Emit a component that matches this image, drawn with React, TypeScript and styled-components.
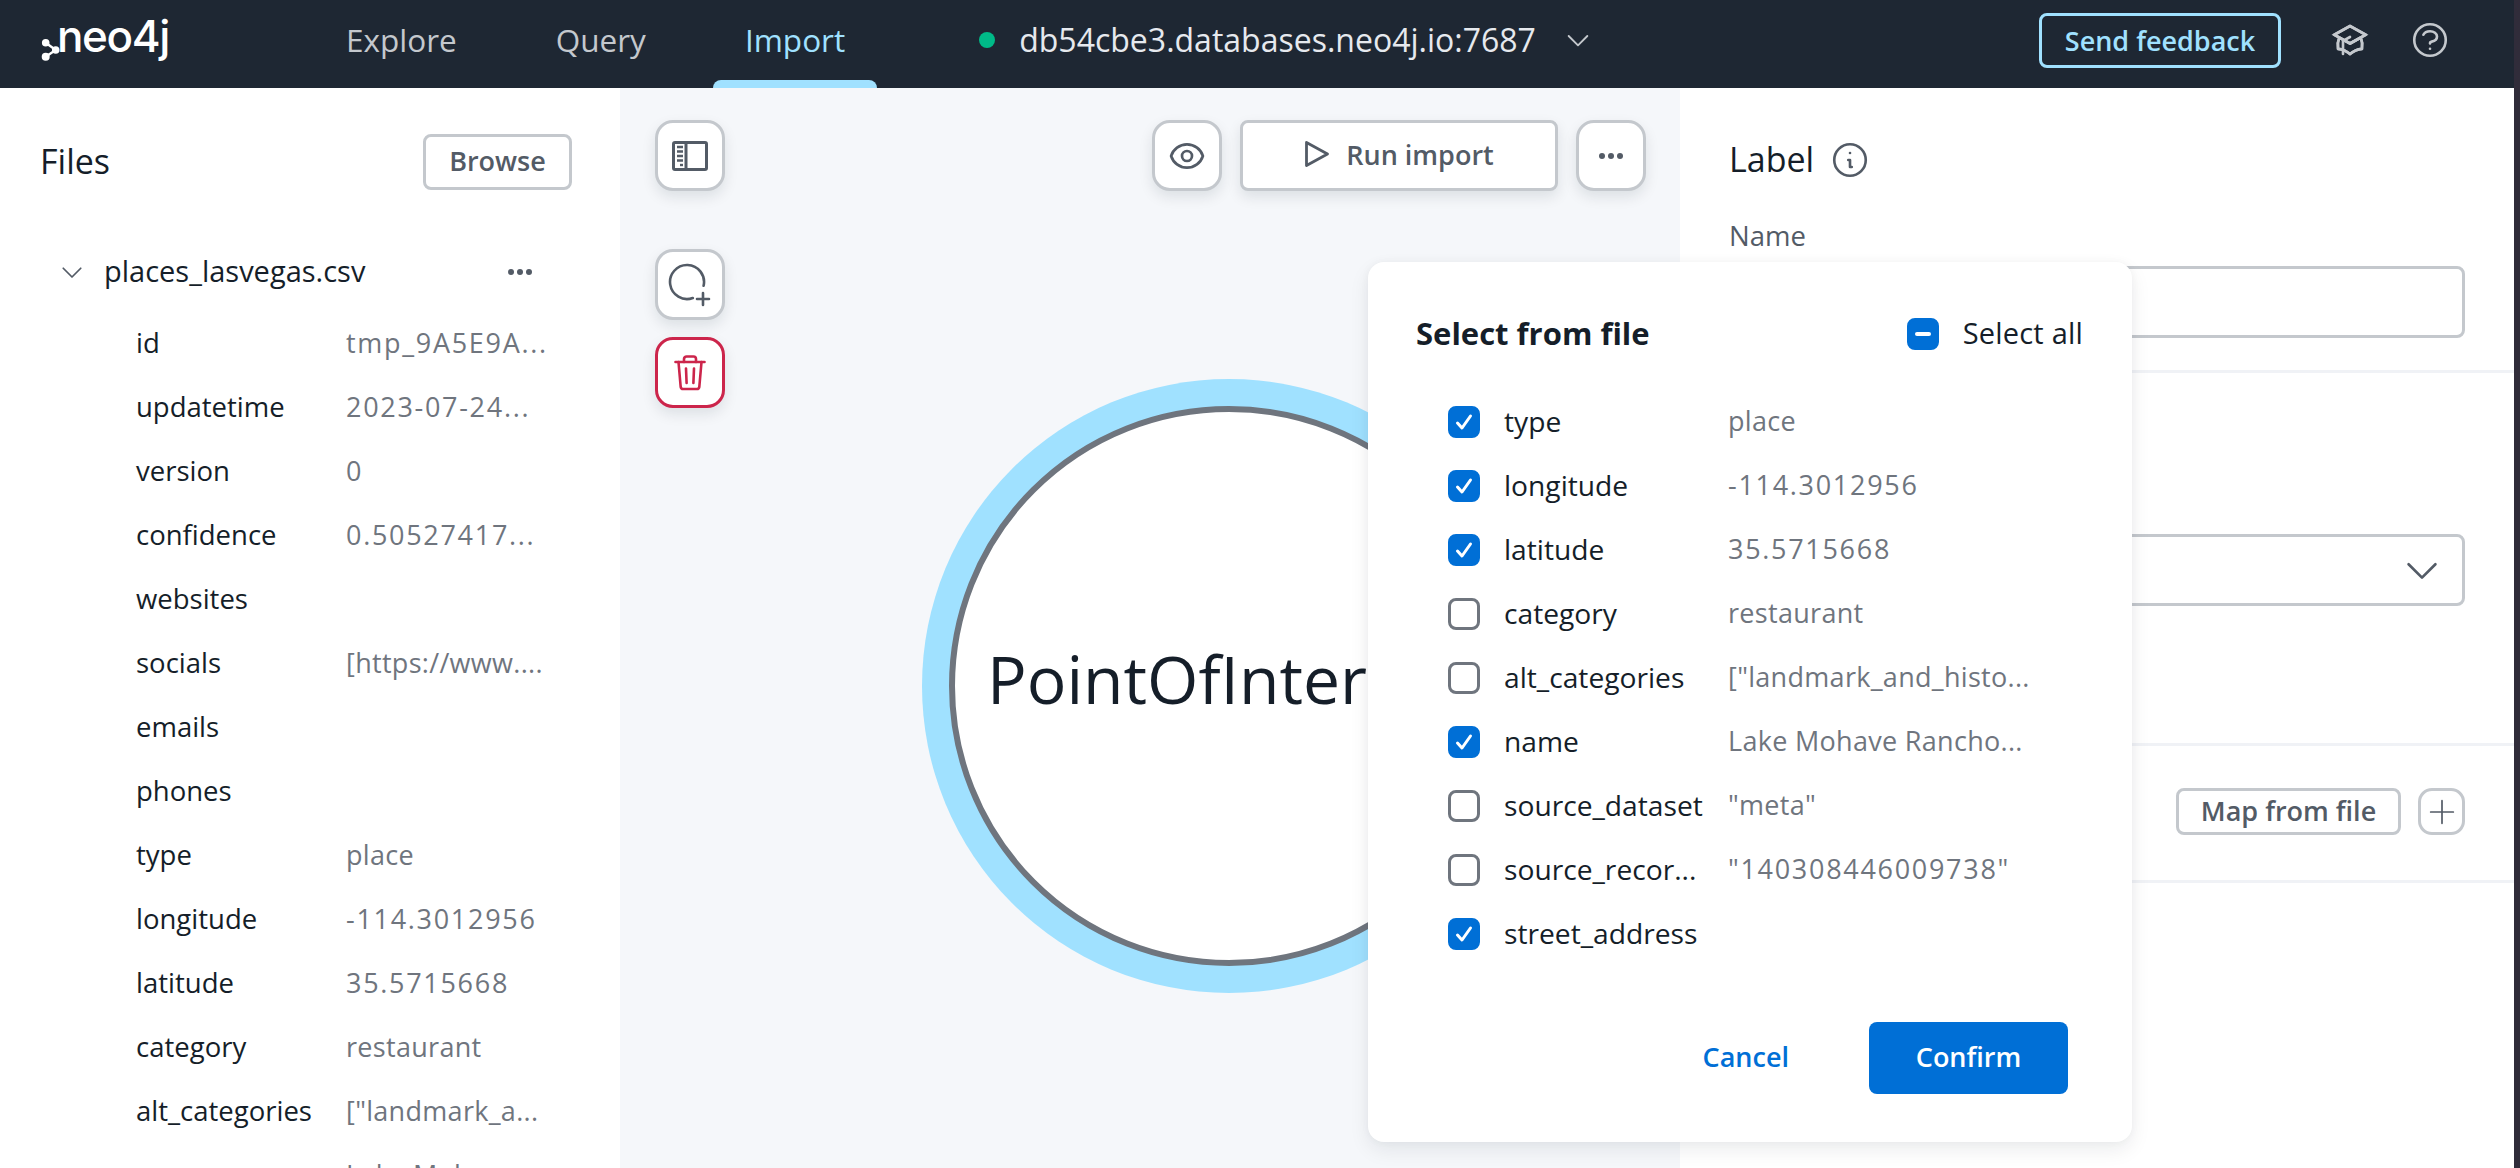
import React from 'react';
import styled, {createGlobalStyle} from 'styled-components';
import {
  HiOutlineAcademicCap,
  HiOutlineChevronDown,
  HiOutlineEye,
  HiOutlineInformationCircle,
  HiOutlinePlus,
  HiOutlineQuestionMarkCircle,
} from 'react-icons/hi';

const fileRows = [
  ['id', 'tmp_9A5E9A...'],
  ['updatetime', '2023-07-24...'],
  ['version', '0'],
  ['confidence', '0.50527417...'],
  ['websites', ''],
  ['socials', '[https://www....'],
  ['emails', ''],
  ['phones', ''],
  ['type', 'place'],
  ['longitude', '-114.3012956'],
  ['latitude', '35.5715668'],
  ['category', 'restaurant'],
  ['alt_categories', '["landmark_a...'],
  ['name', 'Lake Mohav...'],
];

const pickRows: [string, string, boolean][] = [
  ['type', 'place', true],
  ['longitude', '-114.3012956', true],
  ['latitude', '35.5715668', true],
  ['category', 'restaurant', false],
  ['alt_categories', '["landmark_and_histo...', false],
  ['name', 'Lake Mohave Rancho...', true],
  ['source_dataset', '"meta"', false],
  ['source_recor...', '"140308446009738"', false],
  ['street_address', '', true],
];

// digits run narrower in the fallback font than in the original
const hasDigits = (value: string) => /\d/.test(value);

const Dots: React.FC = () => (
  <svg width="26" height="8" viewBox="0 0 26 8" fill="currentColor">
    <circle cx="4" cy="4" r="3" />
    <circle cx="13" cy="4" r="3" />
    <circle cx="22" cy="4" r="3" />
  </svg>
);

const Check: React.FC = () => (
  <svg width="20" height="20" viewBox="0 0 20 20" fill="none" stroke="#fff" strokeWidth="3" strokeLinecap="round" strokeLinejoin="round">
    <path d="M3.5 11l4.5 5L16.5 4" />
  </svg>
);

const SidebarIcon: React.FC = () => (
  <svg width="36" height="30" viewBox="0 0 36 30" fill="none" stroke="#535b66">
    <rect x="1.5" y="1.5" width="33" height="27" rx="1.5" strokeWidth="3" />
    <path d="M14 1.5v27" strokeWidth="3" />
    <path d="M5 6h6M5 10.5h6M5 15h6M5 19.5h6" strokeWidth="2.4" />
    <path d="M8 24h3" strokeWidth="2.4" />
  </svg>
);

const AddNodeIcon: React.FC = () => (
  <svg width="44" height="44" viewBox="0 0 44 44" fill="none" stroke="#535b66" strokeWidth="2.6" strokeLinecap="round">
    <path d="M35.6 22.8A17 17 0 1 0 24.8 35" />
    <path d="M29 36h12M35 30v12" />
  </svg>
);

const TrashIcon: React.FC = () => (
  <svg width="32" height="36" viewBox="0 0 32 36" fill="none" stroke="#cc254b" strokeWidth="2.6" strokeLinecap="round" strokeLinejoin="round">
    <path d="M1.5 7h29" />
    <path d="M10 7V4a2.5 2.5 0 0 1 2.5-2.5h7A2.5 2.5 0 0 1 22 4v3" />
    <path d="M4.5 7l2.2 25a2.4 2.4 0 0 0 2.4 2h13.8a2.4 2.4 0 0 0 2.4-2L27.5 7" />
    <path d="M12 13.5l.6 14.5M20 13.5l-.6 14.5" />
  </svg>
);

const PlayIcon: React.FC = () => (
  <svg width="26" height="28" viewBox="0 0 26 28" fill="none" stroke="#535b66" strokeWidth="2.8" strokeLinejoin="round">
    <path d="M2.5 2.5L23.5 14 2.5 25.5z" />
  </svg>
);

const LogoMark: React.FC = () => (
  <svg width="20" height="24" viewBox="0 0 20 24" fill="#fff" stroke="#fff" strokeWidth="1.6">
    <circle cx="5.7" cy="4.7" r="3" />
    <circle cx="15.7" cy="12" r="3" />
    <circle cx="5.7" cy="18.7" r="3.2" />
    <path d="M5.7 4.7L15.7 12 5.7 18.7" fill="none" strokeWidth="2.4" />
  </svg>
);

const App: React.FC = () => {
  return (
    <Root>
      <GlobalStyle />
      <Main>
        <Header>
          <Logo>
            <MarkWrap>
              <LogoMark />
            </MarkWrap>
            <LogoText>neo4j</LogoText>
          </Logo>
          <Nav>
            <NavItem>Explore</NavItem>
            <NavItem>Query</NavItem>
            <NavItem $active>Import</NavItem>
          </Nav>
          <DbStatus>
            <StatusDot />
            <DbName>db54cbe3.databases.neo4j.io:7687</DbName>
            <HiOutlineChevronDown size={32} strokeWidth={1.4} color="#c4c8cd" />
          </DbStatus>
          <HeaderRight>
            <FeedbackButton>Send feedback</FeedbackButton>
            <HeaderIcons>
              <HiOutlineAcademicCap size={42} strokeWidth={1.5} color="#c4c8cd" />
              <HiOutlineQuestionMarkCircle size={42} strokeWidth={1.5} color="#c4c8cd" />
            </HeaderIcons>
          </HeaderRight>
        </Header>

        <Body>
          <FilesPanel>
            <FilesHeader>
              <PanelTitle>Files</PanelTitle>
              <OutlineButton>Browse</OutlineButton>
            </FilesHeader>
            <FileName>
              <HiOutlineChevronDown size={30} strokeWidth={1.4} color="#535b66" />
              <FileTitle>places_lasvegas.csv</FileTitle>
              <FileDots>
                <Dots />
              </FileDots>
            </FileName>
            {fileRows.map(([key, value]) => (
              <FileRow key={key}>
                <FileKey>{key}</FileKey>
                <Value $digits={hasDigits(value)}>{value}</Value>
              </FileRow>
            ))}
          </FilesPanel>

          <Canvas>
            <Node>
              <NodeInner>
                <NodeLabel>PointOfInterest</NodeLabel>
              </NodeInner>
            </Node>
            <LeftTools>
              <IconButton>
                <SidebarIcon />
              </IconButton>
              <NodeTools>
                <IconButton>
                  <AddNodeIcon />
                </IconButton>
                <IconButton $danger>
                  <TrashIcon />
                </IconButton>
              </NodeTools>
            </LeftTools>
            <RightTools>
              <IconButton>
                <HiOutlineEye size={40} strokeWidth={1.6} color="#535b66" />
              </IconButton>
              <RunButton>
                <PlayIcon />
                Run import
              </RunButton>
              <IconButton>
                <Dots />
              </IconButton>
            </RightTools>
          </Canvas>

          <SidePanel>
            <LabelSection>
              <LabelTitle>
                <PanelTitle>Label</PanelTitle>
                <HiOutlineInformationCircle size={42} strokeWidth={1.5} color="#535b66" />
              </LabelTitle>
              <FieldLabel>Name</FieldLabel>
              <Field />
            </LabelSection>
            <KeySection>
              <Field>
                <HiOutlineChevronDown size={46} strokeWidth={1.4} color="#535b66" />
              </Field>
            </KeySection>
            <MapSection>
              <MapButton>Map from file</MapButton>
              <PlusButton>
                <HiOutlinePlus size={34} strokeWidth={1.2} color="#535b66" />
              </PlusButton>
            </MapSection>
          </SidePanel>
        </Body>
      </Main>
      <WindowEdge />

      <Modal>
        <ModalHeader>
          <ModalTitle>Select from file</ModalTitle>
          <SelectAll>
            <Box $checked>
              <MinusBar />
            </Box>
            <SelectAllText>Select all</SelectAllText>
          </SelectAll>
        </ModalHeader>
        <PickList>
          {pickRows.map(([key, value, checked]) => (
            <PickRow key={key}>
              <Box $checked={checked}>{checked && <Check />}</Box>
              <PickKey>{key}</PickKey>
              <Value $digits={hasDigits(value)}>{value}</Value>
            </PickRow>
          ))}
        </PickList>
        <ModalFooter>
          <CancelButton>Cancel</CancelButton>
          <ConfirmButton>Confirm</ConfirmButton>
        </ModalFooter>
      </Modal>
    </Root>
  );
};

const GlobalStyle = createGlobalStyle`
  html, body {
    margin: 0;
    padding: 0;
    width: 2520px;
    height: 1168px;
    overflow: hidden;
    background: #fff;
  }
  * {
    box-sizing: border-box;
  }
  body, button {
    font-family: "Open Sans", "Noto Sans", sans-serif;
  }
`;

const Root = styled.div`
  position: relative;
  display: flex;
  width: 2520px;
  height: 1168px;
  overflow: hidden;
  color: #151e29;
  font-size: 27.5px;
`;

const Main = styled.div`
  display: flex;
  flex-direction: column;
  width: 2514px;
`;

const WindowEdge = styled.div`
  flex: 1;
  background: #302c3a;
`;

const Header = styled.header`
  display: flex;
  align-items: center;
  flex: 0 0 88px;
  height: 88px;
  padding-left: 40px;
  background: #1e2733;
`;

const Logo = styled.div`
  display: flex;
  align-items: flex-start;
  align-self: flex-start;
  width: 274px;
  padding-top: 14px;
  color: #fff;
`;

const MarkWrap = styled.div`
  display: flex;
  margin-top: 24px;
`;

const LogoText = styled.span`
  margin-left: -3px;
  font-family: "Inter", sans-serif;
  font-size: 44px;
  font-weight: 500;
  line-height: 44px;
  letter-spacing: -1.4px;
`;

const Nav = styled.nav`
  display: flex;
  gap: 35px;
  height: 100%;
`;

const NavItem = styled.div<{$active?: boolean}>`
  position: relative;
  display: flex;
  align-items: center;
  padding: 0 32px 10px;
  font-size: 31.5px;
  color: ${(p) => (p.$active ? '#a0e1ff' : '#c4c8cd')};

  ${(p) =>
    p.$active &&
    `&::after {
      content: '';
      position: absolute;
      left: 0;
      right: 0;
      bottom: 0;
      height: 8px;
      border-radius: 8px 8px 0 0;
      background: #a0e1ff;
    }`}
`;

const DbStatus = styled.div`
  display: flex;
  align-items: center;
  margin-left: 102px;
  padding-bottom: 8px;
`;

const StatusDot = styled.span`
  width: 16px;
  height: 16px;
  border-radius: 50%;
  background: #00ba88;
  margin-right: 24px;
`;

const DbName = styled.span`
  padding-bottom: 2px;
  font-size: 32px;
  color: #e6e9ee;
  margin-right: 26px;
`;

const HeaderRight = styled.div`
  display: flex;
  align-items: center;
  margin-left: auto;
  padding: 0 63px 8px 0;
`;

const FeedbackButton = styled.button`
  width: 242px;
  height: 55px;
  padding: 0;
  border: 3px solid #a0e1ff;
  border-radius: 8px;
  background: transparent;
  color: #a0e1ff;
  font-size: 27px;
  font-weight: 600;
`;

const HeaderIcons = styled.div`
  display: flex;
  align-items: center;
  gap: 38px;
  margin-left: 48px;
`;

const Body = styled.div`
  display: flex;
  flex: 1;
  min-height: 0;
`;

const FilesPanel = styled.aside`
  flex: 0 0 620px;
  padding: 46px 48px 0 40px;
  overflow: hidden;
  background: #fff;
`;

const FilesHeader = styled.div`
  display: flex;
  align-items: center;
  justify-content: space-between;
  margin-bottom: 50px;
`;

const PanelTitle = styled.h2`
  margin: 0;
  padding-bottom: 3px;
  font-size: 34px;
  font-weight: 500;
  line-height: 40px;
`;

const OutlineButton = styled.button`
  width: 149px;
  height: 56px;
  padding: 0 0 3px;
  border: 3px solid #c4c8cd;
  border-radius: 8px;
  background: #fff;
  color: #535b66;
  font-size: 27px;
  font-weight: 600;
`;

const FileName = styled.div`
  display: flex;
  align-items: center;
  height: 64px;
  margin-left: 17px;
  margin-bottom: 8px;
`;

const FileTitle = styled.span`
  margin-left: 17px;
  padding-bottom: 3px;
  font-size: 29px;
  font-weight: 500;
`;

const FileDots = styled.div`
  display: flex;
  margin-left: auto;
  margin-right: 39px;
  color: #535b66;
`;

const FileRow = styled.div`
  display: grid;
  grid-template-columns: 210px 1fr;
  align-items: center;
  height: 64px;
  padding-left: 96px;
`;

const FileKey = styled.span`
  padding-bottom: 3px;
  white-space: nowrap;
`;

const Value = styled.span<{$digits?: boolean}>`
  padding-bottom: 3px;
  color: #6f757e;
  font-size: 27px;
  letter-spacing: ${(p) => (p.$digits ? '1.7px' : '0.3px')};
  white-space: nowrap;
`;

const Canvas = styled.main`
  position: relative;
  display: flex;
  justify-content: space-between;
  flex: 1;
  min-width: 0;
  padding: 32px 34px 0 35px;
  overflow: hidden;
  background: #f5f7fa;
`;

const Node = styled.div`
  position: absolute;
  left: 302px;
  top: 291px;
  width: 614px;
  height: 614px;
  padding: 27px;
  border-radius: 50%;
  background: #a0e1ff;
`;

const NodeInner = styled.div`
  display: flex;
  align-items: center;
  width: 100%;
  height: 100%;
  padding: 0 0 16px 32px;
  border: 6px solid #6f757e;
  border-radius: 50%;
  background: #fff;
`;

const NodeLabel = styled.span`
  font-size: 66px;
  white-space: nowrap;
`;

const LeftTools = styled.div`
  position: relative;
  display: flex;
  flex-direction: column;
  gap: 58px;
`;

const NodeTools = styled.div`
  display: flex;
  flex-direction: column;
  gap: 17px;
`;

const RightTools = styled.div`
  position: relative;
  display: flex;
  gap: 18px;
  align-self: flex-start;
`;

const IconButton = styled.button<{$danger?: boolean}>`
  display: flex;
  align-items: center;
  justify-content: center;
  width: 70px;
  height: 71px;
  padding: 0;
  border: 3px solid ${(p) => (p.$danger ? '#cc254b' : '#c4c8cd')};
  border-radius: 18px;
  background: #fff;
  color: #535b66;
  box-shadow: 0 6px 14px rgba(12, 26, 37, 0.1);
`;

const RunButton = styled.button`
  display: flex;
  align-items: center;
  justify-content: center;
  gap: 16px;
  width: 318px;
  height: 71px;
  padding: 0 0 3px;
  border: 3px solid #c4c8cd;
  border-radius: 8px;
  background: #fff;
  color: #535b66;
  font-size: 27px;
  font-weight: 600;
  box-shadow: 0 6px 14px rgba(12, 26, 37, 0.1);
`;

const SidePanel = styled.aside`
  flex: 0 0 834px;
  background: #fff;
`;

const LabelSection = styled.section`
  padding: 52px 49px 32px 49px;
  border-bottom: 3px solid #f0f2f6;
`;

const LabelTitle = styled.div`
  display: flex;
  align-items: center;
  gap: 15px;
  height: 40px;
  margin-bottom: 40px;
`;

const FieldLabel = styled.div`
  line-height: 32px;
  margin-bottom: 14px;
  padding-bottom: 3px;
  height: 32px;
  color: #535b66;
`;

const Field = styled.div`
  display: flex;
  align-items: center;
  justify-content: flex-end;
  height: 72px;
  padding-right: 17px;
  border: 3px solid #c4c8cd;
  border-radius: 8px;
`;

const KeySection = styled.section`
  height: 373px;
  padding: 161px 49px 0 49px;
  border-bottom: 3px solid #f0f2f6;
`;

const MapSection = styled.section`
  display: flex;
  justify-content: flex-end;
  align-items: flex-start;
  gap: 17px;
  height: 137px;
  padding: 42px 49px 0 0;
  border-bottom: 3px solid #f0f2f6;
`;

const MapButton = styled.button`
  width: 225px;
  height: 47px;
  padding: 0 0 3px;
  border: 3px solid #c4c8cd;
  border-radius: 8px;
  background: #fff;
  color: #535b66;
  font-size: 27px;
  font-weight: 600;
`;

const PlusButton = styled.button`
  display: flex;
  align-items: center;
  justify-content: center;
  width: 47px;
  height: 47px;
  padding: 0;
  border: 3px solid #c4c8cd;
  border-radius: 14px;
  background: #fff;
`;

const Modal = styled.div`
  position: absolute;
  left: 1368px;
  top: 262px;
  display: flex;
  flex-direction: column;
  width: 764px;
  height: 880px;
  padding: 56px 49px 48px 48px;
  border-radius: 16px;
  background: #fff;
  box-shadow: 0 8px 20px rgba(12, 26, 37, 0.08), 0 0 8px rgba(12, 26, 37, 0.04);
`;

const ModalHeader = styled.div`
  display: flex;
  align-items: center;
  justify-content: space-between;
  height: 32px;
  margin-bottom: 40px;
`;

const ModalTitle = styled.h3`
  margin: 0;
  padding-bottom: 3px;
  font-size: 31px;
  font-weight: 700;
`;

const SelectAll = styled.div`
  display: flex;
  align-items: center;
  gap: 24px;
`;

const SelectAllText = styled.span`
  padding-bottom: 3px;
  font-size: 29px;
  letter-spacing: 0.2px;
`;

const Box = styled.span<{$checked?: boolean}>`
  display: flex;
  align-items: center;
  justify-content: center;
  flex: 0 0 32px;
  width: 32px;
  height: 32px;
  border-radius: 8px;
  border: 3px solid ${(p) => (p.$checked ? '#006fd6' : '#6f757e')};
  background: ${(p) => (p.$checked ? '#006fd6' : '#fff')};
`;

const MinusBar = styled.span`
  width: 16px;
  height: 4px;
  border-radius: 2px;
  background: #fff;
`;

const PickList = styled.div`
  padding-left: 32px;
`;

const PickRow = styled.div`
  display: grid;
  grid-template-columns: 32px 248px 1fr;
  align-items: center;
  height: 64px;
`;

const PickKey = styled.span`
  padding: 0 0 3px 24px;
  font-size: 28.2px;
  white-space: nowrap;
`;

const ModalFooter = styled.div`
  display: flex;
  justify-content: flex-end;
  align-items: center;
  gap: 80px;
  margin-top: auto;
  padding-right: 15px;
`;

const CancelButton = styled.button`
  padding: 0 0 3px;
  border: 0;
  background: none;
  color: #006fd6;
  font-size: 27px;
  font-weight: 600;
`;

const ConfirmButton = styled.button`
  width: 199px;
  height: 72px;
  padding: 0 0 3px;
  border: 0;
  border-radius: 8px;
  background: #006fd6;
  color: #fff;
  font-size: 27px;
  font-weight: 600;
`;

export default App;
